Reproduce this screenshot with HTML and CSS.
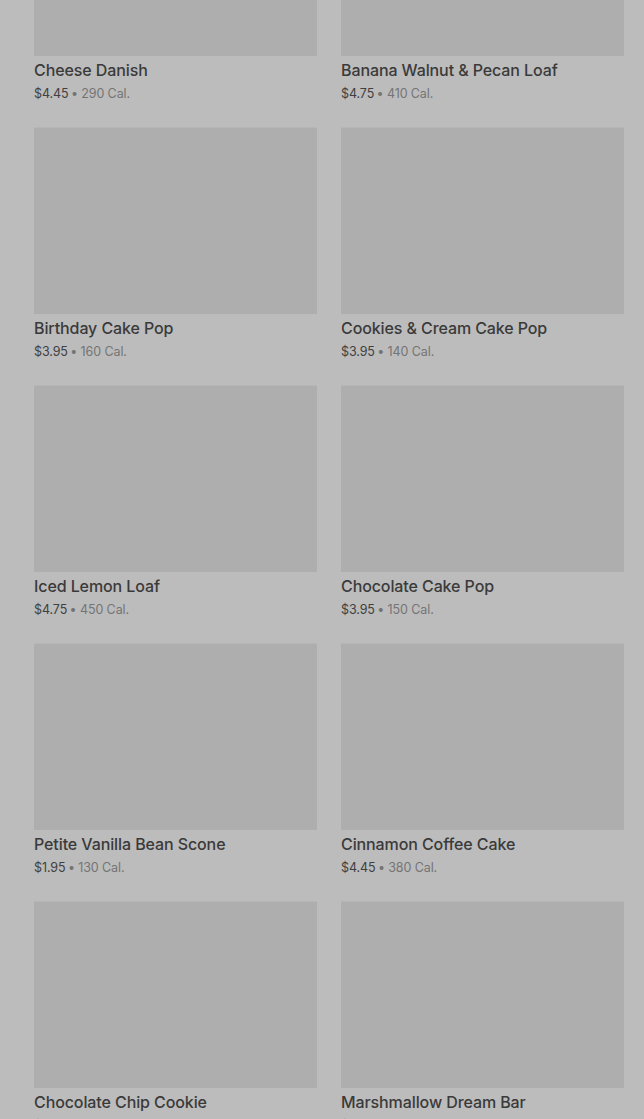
FILE: index.html
```html
<!DOCTYPE html>
<html lang="en">
<head>
    <meta charset="UTF-8">
    <meta name="viewport" content="width=device-width, initial-scale=1.0">
    <title>Bakery</title>
    <link rel="stylesheet" href="styles.css">
</head>
<body>

<div class="menu-grid">
    <div class="product">
        <div class="product-image"></div>
        <p class="product-name">Cheese Danish</p>
        <p class="product-info">$4.45 <span class="cal">&bull; 290 Cal.</span></p>
    </div>
    <div class="product">
        <div class="product-image"></div>
        <p class="product-name">Banana Walnut &amp; Pecan Loaf</p>
        <p class="product-info">$4.75 <span class="cal">&bull; 410 Cal.</span></p>
    </div>
    <div class="product">
        <div class="product-image"></div>
        <p class="product-name">Birthday Cake Pop</p>
        <p class="product-info">$3.95 <span class="cal">&bull; 160 Cal.</span></p>
    </div>
    <div class="product">
        <div class="product-image"></div>
        <p class="product-name">Cookies &amp; Cream Cake Pop</p>
        <p class="product-info">$3.95 <span class="cal">&bull; 140 Cal.</span></p>
    </div>
    <div class="product">
        <div class="product-image"></div>
        <p class="product-name">Iced Lemon Loaf</p>
        <p class="product-info">$4.75 <span class="cal">&bull; 450 Cal.</span></p>
    </div>
    <div class="product">
        <div class="product-image"></div>
        <p class="product-name">Chocolate Cake Pop</p>
        <p class="product-info">$3.95 <span class="cal">&bull; 150 Cal.</span></p>
    </div>
    <div class="product">
        <div class="product-image"></div>
        <p class="product-name">Petite Vanilla Bean Scone</p>
        <p class="product-info">$1.95 <span class="cal">&bull; 130 Cal.</span></p>
    </div>
    <div class="product">
        <div class="product-image"></div>
        <p class="product-name">Cinnamon Coffee Cake</p>
        <p class="product-info">$4.45 <span class="cal">&bull; 380 Cal.</span></p>
    </div>
    <div class="product">
        <div class="product-image"></div>
        <p class="product-name">Chocolate Chip Cookie</p>
        <p class="product-info">$2.95 <span class="cal">&bull; 370 Cal.</span></p>
    </div>
    <div class="product">
        <div class="product-image"></div>
        <p class="product-name">Marshmallow Dream Bar</p>
        <p class="product-info">$2.95 <span class="cal">&bull; 210 Cal.</span></p>
    </div>
</div>

</body>
</html>
```

FILE: styles.css
```css
html, body {
    margin: 0;
    background-color: #bcbcbc;
    font-family: Inter, "Noto Sans", sans-serif;
    overflow: hidden;
}

/* page is scrolled part way down the list */
.menu-grid {
    display: grid;
    grid-template-columns: 283px 283px;
    column-gap: 24px;
    padding: 0 20px 0 34px;
    margin-top: -131px;
}

.product {
    height: 258px;
}

.product-image {
    height: 187px;
    background-color: #aeaeae;
    border-top: 1px solid #b6b6b6;
    box-sizing: border-box;
}

.product-name {
    margin: 4px 0 0;
    font-size: 16px;
    font-weight: 500;
    line-height: 20px;
    letter-spacing: -0.1px;
    color: #3a3a3a;
}

.product-info {
    margin: 5px 0 0;
    font-size: 12.5px;
    line-height: 18px;
    letter-spacing: -0.1px;
    color: #404040;
}

.cal {
    color: #747474;
    margin-left: -1px;
}
```
